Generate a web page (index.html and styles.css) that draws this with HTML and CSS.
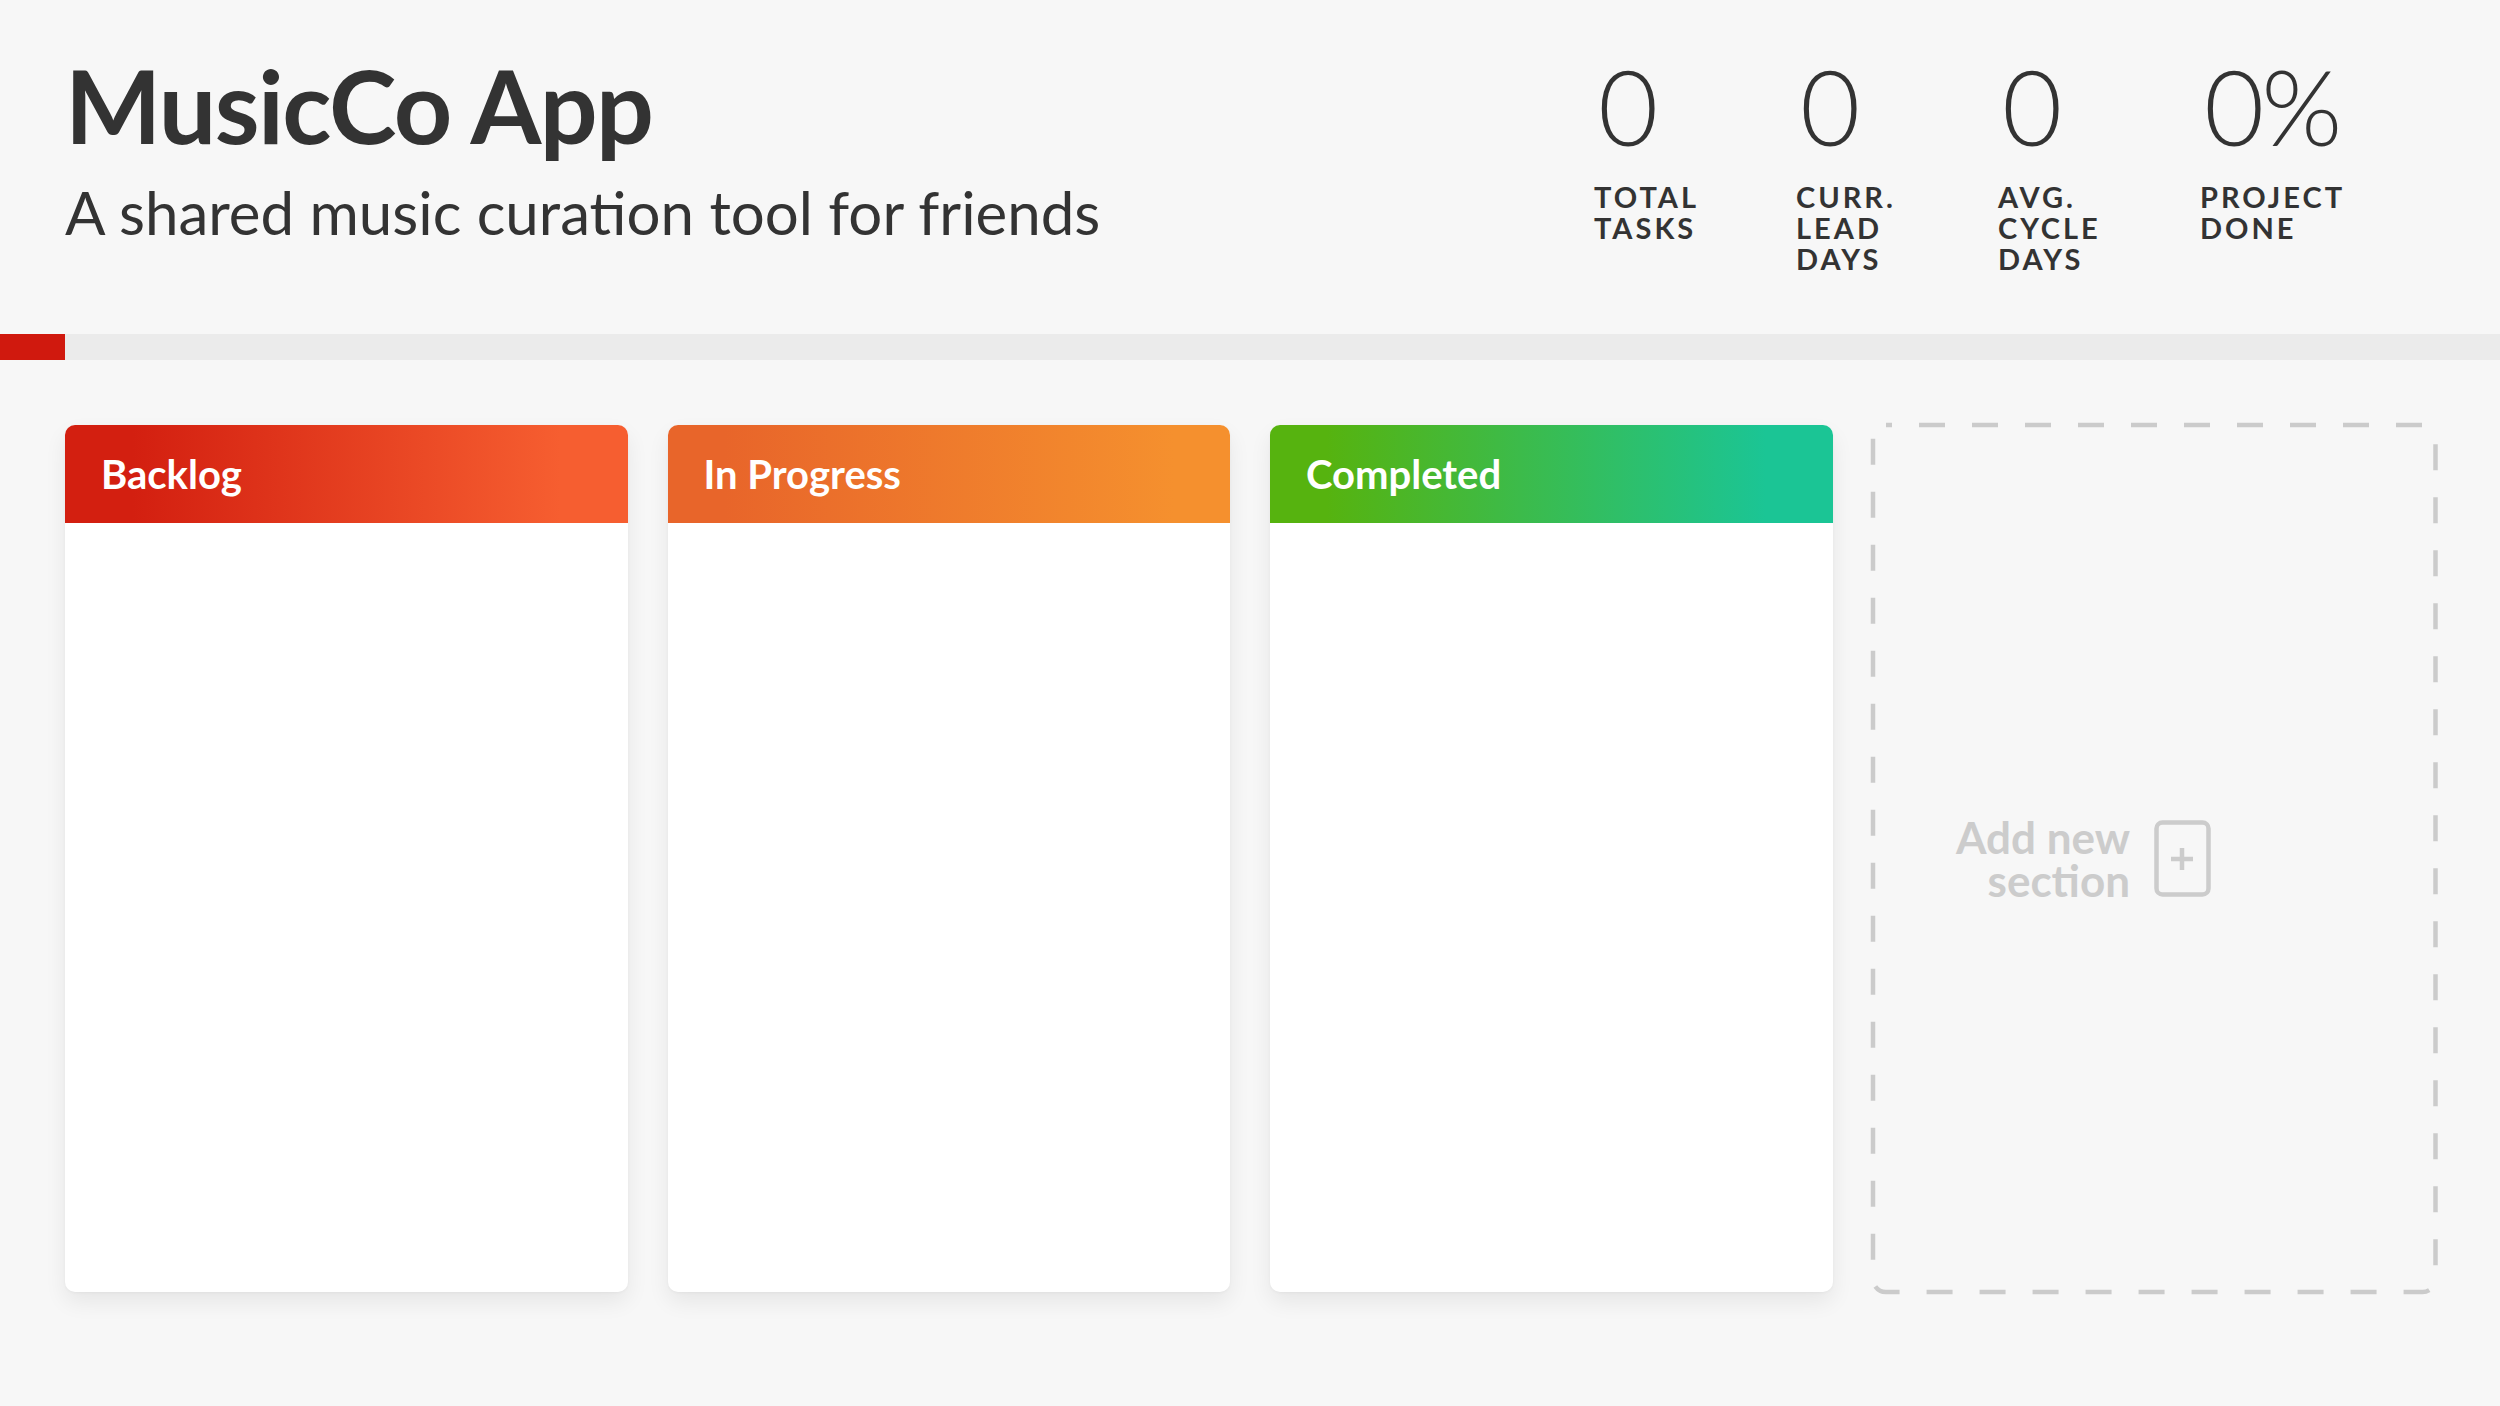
FILE: index.html
```html
<!DOCTYPE html>
<html lang="en">
<head>
<meta charset="utf-8">
<title>MusicCo App</title>
<link rel="stylesheet" href="styles.css">
</head>
<body>
<header class="top">
  <div class="brand">
    <h1 class="title">MusicCo App</h1>
    <p class="subtitle">A shared music curation tool for friends</p>
  </div>
  <div class="stats">
    <div class="stat">
      <div class="stat-num">0</div>
      <div class="stat-label">Total<br>Tasks</div>
    </div>
    <div class="stat">
      <div class="stat-num">0</div>
      <div class="stat-label">Curr.<br>Lead<br>Days</div>
    </div>
    <div class="stat">
      <div class="stat-num">0</div>
      <div class="stat-label">Avg.<br>Cycle<br>Days</div>
    </div>
    <div class="stat">
      <div class="stat-num">0%</div>
      <div class="stat-label">Project<br>Done</div>
    </div>
  </div>
</header>
<div class="progress"><div class="progress-fill"></div></div>
<main class="board">
  <section class="column">
    <div class="column-head head-backlog">Backlog</div>
    <div class="column-body"></div>
  </section>
  <section class="column">
    <div class="column-head head-progress">In Progress</div>
    <div class="column-body"></div>
  </section>
  <section class="column">
    <div class="column-head head-done">Completed</div>
    <div class="column-body"></div>
  </section>
  <section class="add-section">
    <svg class="dash-frame" width="100%" height="100%" aria-hidden="true">
      <rect x="0" y="0" width="100%" height="100%" rx="13" ry="13" fill="none" stroke="#cbcbcb" stroke-width="4.5" stroke-dasharray="26 27" stroke-dashoffset="20"/>
    </svg>
    <div class="add-text"><div class="add-line">Add new</div><div class="add-line">section</div></div>
    <svg class="add-icon" width="57" height="77" viewBox="0 0 57 77" aria-hidden="true">
      <rect x="2.5" y="2.5" width="52" height="72" rx="6" ry="6" fill="none" stroke="#cccccc" stroke-width="4.5"/>
      <path d="M28 28 V50 M17 39 H39" stroke="#cccccc" stroke-width="4.5" fill="none"/>
    </svg>
  </section>
</main>
</body>
</html>
```
FILE: styles.css
```css
* {
  box-sizing: border-box;
}

html, body {
  margin: 0;
  padding: 0;
}

body {
  background: #f7f7f7;
  color: #333333;
  font-family: Lato, "Open Sans", "Liberation Sans", sans-serif;
  width: 2500px;
  height: 1406px;
  overflow: hidden;
}

.top {
  height: 334px;
  display: flex;
  align-items: flex-start;
  padding: 44px 98px 0 65px;
}

.brand {
  flex: 1;
}

.title {
  margin: 0;
  font-size: 102px;
  line-height: 1.2;
  font-weight: 700;
  letter-spacing: -1.6px;
  color: #333333;
}

.subtitle {
  margin: 10px 0 0 0;
  font-size: 60px;
  line-height: 1.2;
  font-weight: 400;
  color: #333333;
}

.stats {
  display: grid;
  grid-template-columns: repeat(4, 202px);
}

.stat-num {
  font-size: 104px;
  line-height: 1.2;
  font-weight: 300;
  letter-spacing: -3px;
  padding-left: 4px;
}

.stat-label {
  margin-top: 12px;
  font-size: 29px;
  line-height: 31px;
  font-weight: 700;
  letter-spacing: 3px;
  text-transform: uppercase;
}

.progress {
  height: 26px;
  background: #ebebeb;
}

.progress-fill {
  width: 65px;
  height: 100%;
  background: #d0190e;
}

.board {
  display: grid;
  grid-template-columns: repeat(4, 1fr);
  column-gap: 40px;
  padding: 65px 65px 0 65px;
}

.column {
  height: 867px;
  background: #ffffff;
  border-radius: 10px;
  box-shadow: 0 10px 22px rgba(0, 0, 0, 0.07), 0 1px 3px rgba(0, 0, 0, 0.04);
  display: flex;
  flex-direction: column;
  overflow: hidden;
}

.column-head {
  height: 98px;
  display: flex;
  align-items: center;
  padding-left: 36px;
  color: #ffffff;
  font-size: 40px;
  font-weight: 700;
}

.head-backlog {
  background: linear-gradient(to right, #d31f10 12%, #f65e30 88%);
}

.head-progress {
  background: linear-gradient(to right, #e8652a 10%, #f5902e 90%);
}

.head-done {
  background: linear-gradient(to right, #56b30f 10%, #1bc595 88%);
}

.column-body {
  flex: 1;
}

.add-section {
  position: relative;
  height: 867px;
  display: flex;
  align-items: center;
  justify-content: flex-end;
  padding-right: 224px;
  gap: 24px;
}

.dash-frame {
  position: absolute;
  left: 0;
  top: 0;
  overflow: visible;
}

.add-text {
  text-align: right;
  font-size: 44px;
  font-weight: 700;
  color: #cccccc;
}

.add-line {
  line-height: 43px;
}

.add-icon {
  display: block;
  flex: none;
}
```
